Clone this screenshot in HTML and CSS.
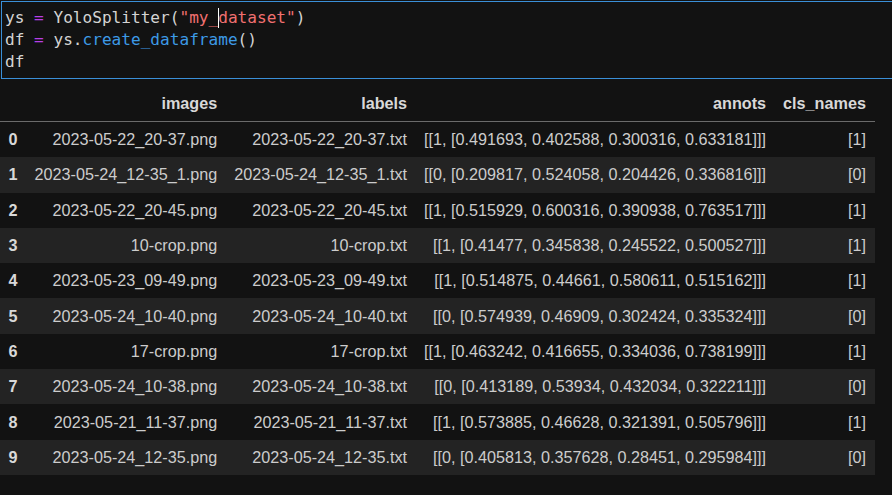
FILE: index.html
```html
<!DOCTYPE html>
<html>
<head>
<meta charset="utf-8">
<link rel="stylesheet" href="styles.css">
</head>
<body>
<div class="cell">
<div class="line">ys <span class="op">=</span> YoloSplitter(<span class="str">"my_<span class="cursor"></span>dataset"</span>)</div>
<div class="line">df <span class="op">=</span> ys.<span class="fn">create_dataframe</span>()</div>
<div class="line">df</div>
</div>
<div class="output">
<table class="df">
<thead>
<tr><th></th><th>images</th><th>labels</th><th>annots</th><th>cls_names</th></tr>
</thead>
<tbody>
<tr><th>0</th><td>2023-05-22_20-37.png</td><td>2023-05-22_20-37.txt</td><td>[[1, [0.491693, 0.402588, 0.300316, 0.633181]]]</td><td>[1]</td></tr>
<tr><th>1</th><td>2023-05-24_12-35_1.png</td><td>2023-05-24_12-35_1.txt</td><td>[[0, [0.209817, 0.524058, 0.204426, 0.336816]]]</td><td>[0]</td></tr>
<tr><th>2</th><td>2023-05-22_20-45.png</td><td>2023-05-22_20-45.txt</td><td>[[1, [0.515929, 0.600316, 0.390938, 0.763517]]]</td><td>[1]</td></tr>
<tr><th>3</th><td>10-crop.png</td><td>10-crop.txt</td><td>[[1, [0.41477, 0.345838, 0.245522, 0.500527]]]</td><td>[1]</td></tr>
<tr><th>4</th><td>2023-05-23_09-49.png</td><td>2023-05-23_09-49.txt</td><td>[[1, [0.514875, 0.44661, 0.580611, 0.515162]]]</td><td>[1]</td></tr>
<tr><th>5</th><td>2023-05-24_10-40.png</td><td>2023-05-24_10-40.txt</td><td>[[0, [0.574939, 0.46909, 0.302424, 0.335324]]]</td><td>[0]</td></tr>
<tr><th>6</th><td>17-crop.png</td><td>17-crop.txt</td><td>[[1, [0.463242, 0.416655, 0.334036, 0.738199]]]</td><td>[1]</td></tr>
<tr><th>7</th><td>2023-05-24_10-38.png</td><td>2023-05-24_10-38.txt</td><td>[[0, [0.413189, 0.53934, 0.432034, 0.322211]]]</td><td>[0]</td></tr>
<tr><th>8</th><td>2023-05-21_11-37.png</td><td>2023-05-21_11-37.txt</td><td>[[1, [0.573885, 0.46628, 0.321391, 0.505796]]]</td><td>[1]</td></tr>
<tr><th>9</th><td>2023-05-24_12-35.png</td><td>2023-05-24_12-35.txt</td><td>[[0, [0.405813, 0.357628, 0.28451, 0.295984]]]</td><td>[0]</td></tr>
</tbody>
</table>
</div>
</body>
</html>
```
FILE: styles.css
```css
html, body {
  margin: 0;
  padding: 0;
  background: #121212;
  height: 100%;
  overflow: hidden;
}
.cell {
  margin: 1px 0 0 1px;
  border: 1px solid #3a8fd8;
  border-right: none;
  padding: 5px 0 0 3px;
  box-sizing: border-box;
  height: 78px;
  background: #121212;
  font-family: "DejaVu Sans Mono", monospace;
  font-size: 16.1px;
  line-height: 22px;
  color: #d4d4d4;
}
.line {
  white-space: pre;
}
.op { color: #b83fe6; }
.str { color: #f07070; }
.fn { color: #3d9ae6; }
.cursor {
  display: inline-block;
  width: 1px;
  height: 20px;
  background: #ffffff;
  vertical-align: -5px;
  margin-right: -1px;
}
.output {
  padding-top: 7px;
}
.df {
  border-collapse: collapse;
  font-family: "Liberation Sans", Arial, sans-serif;
  font-size: 16.2px;
  color: #cccccc;
}
.df th, .df td {
  padding: 0 8.5px;
  height: 35.3px;
  text-align: right;
  white-space: nowrap;
}
.df thead th {
  font-weight: bold;
  color: #d8d8d8;
  border-bottom: 1px solid #6a6a6a;
  height: 35px;
}
.df tbody th {
  text-align: left;
  font-weight: bold;
  color: #d8d8d8;
}
.df tbody tr:nth-child(odd) {
  background: #121212;
}
.df tbody tr:nth-child(even) {
  background: #232323;
}
.df td:last-child, .df th:last-child {
  padding-right: 9px;
}
```
